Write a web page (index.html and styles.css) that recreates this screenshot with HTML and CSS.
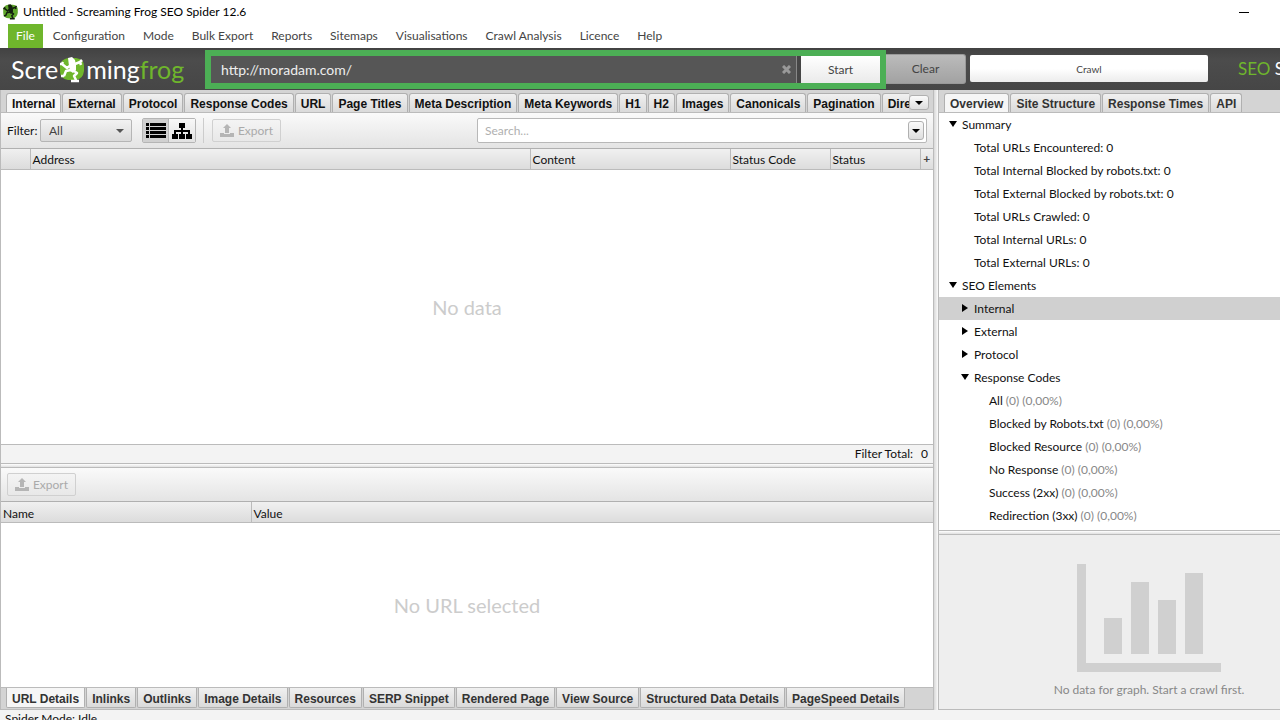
FILE: index.html
```
<!DOCTYPE html>
<html lang="en">
<head>
<meta charset="utf-8">
<title>Untitled - Screaming Frog SEO Spider 12.6</title>
<link rel="stylesheet" href="styles.css">
</head>
<body>
<svg class="defs" aria-hidden="true">
  <symbol id="frog" viewBox="0 0 28 28">
    <path class="frog-disc" d="M10 3H18Q26 4 26 11V16Q25 24 18 25H10Q2 24 2 16V11Q3 4 10 3Z"/>
    <path class="frog-body" d="M10 3L14 2 17 5 18 10 18 15 15 18 12 16 11 11Z"/>
    <path class="frog-limb" d="M13 10L9 13 4 9M4 9L2 9M4 9L5 7M17 9L22 7 23 10M22 7L24 5M13 15L8 16 6 21M6 21L3 21M16 16L19 18 16 21 18 25M13 26H21"/>
  </symbol>
  <symbol id="upload" viewBox="0 0 14 13">
    <path d="M7 0L11 4H9V9H5V4H3ZM0 9H4V10H10V9H14V13H0Z"/>
  </symbol>
</svg>
<div class="app">
  <header class="titlebar">
    <svg class="app-icon"><use href="#frog"/></svg>
    <span class="title">Untitled - Screaming Frog SEO Spider 12.6</span>
    <button class="minimise" aria-label="Minimise"><span></span></button>
  </header>
  <nav class="menu">
    <button class="menu-item active">File</button>
    <button class="menu-item">Configuration</button>
    <button class="menu-item">Mode</button>
    <button class="menu-item">Bulk Export</button>
    <button class="menu-item">Reports</button>
    <button class="menu-item">Sitemaps</button>
    <button class="menu-item">Visualisations</button>
    <button class="menu-item">Crawl Analysis</button>
    <button class="menu-item">Licence</button>
    <button class="menu-item">Help</button>
  </nav>
  <div class="banner">
    <div class="logo"><span>Scre</span><svg class="logo-frog"><use href="#frog"/></svg><span>ming</span><span class="green">frog</span></div>
    <form class="crawl-form">
      <div class="url-box">
        <input class="url-input" type="text" aria-label="URL to spider" value="http://moradam.com/">
        <button class="url-clear" type="button" aria-label="Clear URL"><svg viewBox="0 0 9 9"><path d="M1 1L8 8M8 1L1 8"/></svg></button>
      </div>
      <button class="start" type="button">Start</button>
    </form>
    <button class="clear">Clear</button>
    <div class="progress">Crawl</div>
    <div class="product"><span class="green">SEO</span> Spider</div>
  </div>
  <main class="workspace">
    <section class="left">
      <div class="tabs top-tabs">
        <div class="tab-strip">
          <button class="tab selected">Internal</button>
          <button class="tab">External</button>
          <button class="tab">Protocol</button>
          <button class="tab">Response Codes</button>
          <button class="tab">URL</button>
          <button class="tab">Page Titles</button>
          <button class="tab">Meta Description</button>
          <button class="tab">Meta Keywords</button>
          <button class="tab">H1</button>
          <button class="tab">H2</button>
          <button class="tab">Images</button>
          <button class="tab">Canonicals</button>
          <button class="tab">Pagination</button>
          <button class="tab">Directives</button>
        </div>
        <button class="drop" aria-label="More tabs"><span class="caret"></span></button>
      </div>
      <div class="toolbar">
        <label for="filter">Filter:</label>
        <div class="select-wrap">
          <select id="filter"><option>All</option></select>
          <span class="caret grey"></span>
        </div>
        <div class="views">
          <button class="view on" aria-label="List view"><svg width="20" height="16" viewBox="0 0 20 16"><path d="M0 0H3V3H0ZM4 0H20V3H4ZM0 4H3V7H0ZM4 4H20V7H4ZM0 8H3V11H0ZM4 8H20V11H4ZM0 12H3V15H0ZM4 12H20V15H4Z"/></svg></button>
          <button class="view" aria-label="Tree view"><svg width="20" height="16" viewBox="0 0 20 16"><path d="M7 0H13V5H11V7H18V11H20V16H14V11H16V9H11V11H13V16H7V11H9V9H4V11H6V16H0V11H2V7H9V5H7Z"/></svg></button>
        </div>
        <span class="rule"></span>
        <button class="export" disabled><svg width="14" height="13"><use href="#upload"/></svg>Export</button>
        <div class="search">
          <input type="text" placeholder="Search..." aria-label="Search">
          <button class="drop" aria-label="Search options"><span class="caret"></span></button>
        </div>
      </div>
      <div class="grid-pane">
        <table class="grid">
          <colgroup><col class="c-row"><col class="c-address"><col class="c-content"><col class="c-code"><col><col class="c-plus"></colgroup>
          <thead><tr><th></th><th>Address</th><th>Content</th><th>Status Code</th><th>Status</th><th class="plus">+</th></tr></thead>
        </table>
        <div class="empty">No data</div>
      </div>
      <div class="totals"><span>Filter Total:</span><span>0</span></div>
      <div class="split-h"></div>
      <div class="toolbar lower">
        <button class="export" disabled><svg width="14" height="13"><use href="#upload"/></svg>Export</button>
      </div>
      <div class="grid-pane details">
        <table class="grid">
          <colgroup><col class="c-name"><col></colgroup>
          <thead><tr><th>Name</th><th>Value</th></tr></thead>
        </table>
        <div class="empty">No URL selected</div>
      </div>
      <div class="tabs bottom-tabs">
        <button class="tab selected">URL Details</button>
        <button class="tab">Inlinks</button>
        <button class="tab">Outlinks</button>
        <button class="tab">Image Details</button>
        <button class="tab">Resources</button>
        <button class="tab">SERP Snippet</button>
        <button class="tab">Rendered Page</button>
        <button class="tab">View Source</button>
        <button class="tab">Structured Data Details</button>
        <button class="tab">PageSpeed Details</button>
      </div>
    </section>
    <div class="split-v"></div>
    <aside class="right">
      <div class="tabs side-tabs">
        <button class="tab selected">Overview</button>
        <button class="tab">Site Structure</button>
        <button class="tab">Response Times</button>
        <button class="tab">API</button>
      </div>
      <ul class="tree">
        <li class="l1"><span class="arrow down"></span>Summary</li>
        <li class="l2">Total URLs Encountered: 0</li>
        <li class="l2">Total Internal Blocked by robots.txt: 0</li>
        <li class="l2">Total External Blocked by robots.txt: 0</li>
        <li class="l2">Total URLs Crawled: 0</li>
        <li class="l2">Total Internal URLs: 0</li>
        <li class="l2">Total External URLs: 0</li>
        <li class="l1"><span class="arrow down"></span>SEO Elements</li>
        <li class="l2 current"><span class="arrow"></span>Internal</li>
        <li class="l2"><span class="arrow"></span>External</li>
        <li class="l2"><span class="arrow"></span>Protocol</li>
        <li class="l2"><span class="arrow down"></span>Response Codes</li>
        <li class="l3">All <span class="count">(0) (0,00%)</span></li>
        <li class="l3">Blocked by Robots.txt <span class="count">(0) (0,00%)</span></li>
        <li class="l3">Blocked Resource <span class="count">(0) (0,00%)</span></li>
        <li class="l3">No Response <span class="count">(0) (0,00%)</span></li>
        <li class="l3">Success (2xx) <span class="count">(0) (0,00%)</span></li>
        <li class="l3">Redirection (3xx) <span class="count">(0) (0,00%)</span></li>
      </ul>
      <div class="split-h"></div>
      <div class="graph">
        <svg width="144" height="108" viewBox="0 0 144 108"><path d="M0 0H9V99H144V108H0ZM27 54H45V90H27ZM54 18H72V90H54ZM81 36H99V90H81ZM108 9H126V90H108Z"/></svg>
        <p>No data for graph. Start a crawl first.</p>
      </div>
    </aside>
  </main>
  <footer class="status">Spider Mode: Idle</footer>
</div>
</body>
</html>
```

FILE: styles.css
```
* { box-sizing: border-box; }

body {
  margin: 0;
  background: #fff;
  color: #111;
  font: 12px/16px Lato, "Open Sans", sans-serif;
}

button, input, select { font: inherit; color: inherit; margin: 0; }
button { padding: 0; white-space: nowrap; }

.defs { position: absolute; width: 0; height: 0; }

.app {
  display: flex;
  flex-direction: column;
  height: 100vh;
  overflow: hidden;
}

.titlebar, .menu, .banner, .status { flex: none; }

.titlebar {
  display: flex;
  align-items: center;
  height: 24px;
  padding-left: 2px;
}
.app-icon { width: 17px; height: 17px; margin: 0 4px 2px 0; --disc: #5fa62b; --body: #14200f; }
.title { flex: 1; color: #000; }
.minimise {
  width: 46px;
  height: 24px;
  margin-right: 13px;
  border: 0;
  background: none;
}
.minimise span { display: block; width: 10px; height: 1px; margin: 0 auto; background: #000; }
.frog-disc { fill: var(--disc); }
.frog-body { fill: var(--body); }
.frog-limb { fill: none; stroke: var(--body); stroke-width: 2.5; stroke-linejoin: round; }

.menu { display: flex; height: 24px; padding-left: 8px; }
.menu-item {
  padding: 0 8px;
  margin-right: 2px;
  border: 0;
  background: none;
  color: #444;
}
.menu-item.active { background: #6fb62c; color: #fff; }

.banner {
  display: flex;
  height: 42px;
  background: linear-gradient(#424242, #4c4c4c 30%, #464646);
}
.logo {
  flex: none;
  display: flex;
  align-items: center;
  width: 205px;
  padding-left: 11px;
  color: #fff;
  font-size: 25px;
  line-height: 40px;
}
.logo-frog { width: 28px; height: 28px; --disc: #6fb62c; --body: #fff; }
.green { color: #6fb62c; }

.crawl-form {
  flex: 1;
  display: flex;
  gap: 4px;
  margin-top: 2px;
  height: 39px;
  border: 6px solid #4caf55;
  background: #464646;
}
.url-box {
  flex: 1;
  display: flex;
  align-items: center;
  border-right: 1px solid #888;
  background: #565656;
}
.url-input {
  flex: 1;
  min-width: 0;
  height: 27px;
  padding: 0 10px;
  border: 0;
  outline: 0;
  background: none;
  color: #eee;
  font-size: 14px;
}
.url-clear { width: 9px; height: 9px; margin-right: 5px; border: 0; background: none; }
.url-clear svg { display: block; width: 9px; height: 9px; stroke: #999; stroke-width: 3; }
.start {
  width: 79px;
  border: 0;
  background: linear-gradient(#fff, #eaeaea);
  color: #444;
}
.clear {
  width: 80px;
  margin: 6px 0;
  border: 1px solid #999;
  border-left: 0;
  border-radius: 0 3px 3px 0;
  background: linear-gradient(#bbb, #a2a2a2);
  color: #444;
}
.progress {
  width: 238px;
  height: 27px;
  margin: 7px 0 0 4px;
  border-radius: 2px;
  background: linear-gradient(#fff, #fff 50%, #ececec);
  color: #444;
  font-size: 10px;
  line-height: 28px;
  text-align: center;
}
.product {
  width: 72px;
  padding-left: 30px;
  overflow: hidden;
  color: #fff;
  font-size: 17px;
  line-height: 42px;
  white-space: nowrap;
}

.workspace {
  flex: 1;
  min-height: 0;
  display: grid;
  grid-template-columns: minmax(0, 1fr) 5px 341px;
}
.left, .right { display: flex; flex-direction: column; min-width: 0; min-height: 0; }
.left { border: solid #bbb; border-width: 0 1px; }
.left > *, .right > * { flex: none; }

.tabs { display: flex; background: #d4d4d4; }
.tab-strip { flex: 1; display: flex; overflow: hidden; min-width: 0; height: 23px; padding-top: 3px; }
.tab {
  flex: none;
  height: 19px;
  margin-right: 1px;
  padding: 2px 5px 0;
  border: 1px solid #b0b0b0;
  border-bottom: 0;
  border-radius: 3px 3px 0 0;
  background: linear-gradient(#f0f0f0, #dadada);
  color: #111;
  font: bold 12px/16px "Liberation Sans", Arial, sans-serif;
}
.tab.selected { background: #f6f6f6; }
.top-tabs { padding-left: 5px; border-bottom: 1px solid #bbb; height: 23px; }
.top-tabs .drop { margin: 5px 4px 0 0; }
.drop {
  display: grid;
  place-items: center;
  flex: none;
  width: 20px;
  height: 15px;
  border: 1px solid #b0b0b0;
  border-radius: 3px;
  background: linear-gradient(#fafafa, #dedede);
}
.caret {
  border: 4px solid transparent;
  border-top-color: #000;
  border-bottom-width: 0;
}
.caret.grey { border-top-color: #555; }
.side-tabs { height: 23px; padding: 3px 0 0 5px; border-bottom: 1px solid #bbb; }
.side-tabs .tab, .bottom-tabs .tab { color: #333; }
.bottom-tabs { height: 23px; padding-left: 5px; border: solid #bbb; border-width: 1px 0; }
.bottom-tabs .tab { height: 20px; border-width: 0 1px 1px; border-style: solid; border-color: #b0b0b0; border-radius: 0 0 2px 2px; }

.toolbar {
  display: flex;
  align-items: center;
  height: 36px;
  padding: 0 6px;
  border-bottom: 1px solid #b0b0b0;
  background: linear-gradient(#fafafa, #e4e4e4);
}
.toolbar label { width: 33px; white-space: nowrap; }
.select-wrap { position: relative; }
.select-wrap select {
  display: block;
  appearance: none;
  width: 92px;
  height: 23px;
  padding: 0 8px;
  border: 1px solid #b5b5b5;
  border-radius: 2px;
  background: linear-gradient(#f2f2f2, #dadada);
  color: #444;
}
.select-wrap .caret { position: absolute; right: 8px; top: 10px; }
.views {
  display: flex;
  height: 25px;
  margin-left: 10px;
  border: 1px solid #b5b5b5;
  border-radius: 2px;
}
.view {
  display: grid;
  place-items: center;
  width: 26px;
  border: 0;
  background: linear-gradient(#f8f8f8, #e2e2e2);
}
.view.on { border-right: 1px solid #b5b5b5; background: #d0d0d0; }
.rule { width: 1px; height: 25px; margin: 0 8px 0 7px; background: #ccc; }
.export {
  display: flex;
  align-items: center;
  justify-content: center;
  gap: 4px;
  width: 69px;
  height: 23px;
  border: 1px solid #d0d0d0;
  border-radius: 2px;
  background: linear-gradient(#f4f4f4, #e8e8e8);
  color: #aaa;
  fill: #b5b5b5;
}
.search {
  display: flex;
  align-items: center;
  width: 450px;
  height: 25px;
  margin-left: auto;
  padding-right: 2px;
  border: 1px solid #b8b8b8;
  border-radius: 2px;
  background: #fff;
}
.search input {
  flex: 1;
  min-width: 0;
  padding: 0 7px;
  border: 0;
  outline: 0;
  background: none;
}
.search input::placeholder { color: #b0b0b0; }
.search .drop { width: 16px; height: 19px; }

.left > .grid-pane { flex: 296 1 0; display: flex; flex-direction: column; min-height: 0; background: #fff; }
.left > .details { flex-grow: 185; }
.grid { width: 100%; border-collapse: collapse; table-layout: fixed; }
.grid th {
  height: 20px;
  padding: 2px 2px 0;
  border-right: 1px solid #bbb;
  border-bottom: 1px solid #bbb;
  background: linear-gradient(#f0f0f0, #dcdcdc);
  font-weight: normal;
  line-height: 17px;
  text-align: left;
  white-space: nowrap;
}
.grid th:last-child { border-right: 0; }
.grid .plus { padding: 0; font-weight: bold; text-align: center; color: #444; }
.c-row { width: 29px; }
.c-address { width: 500px; }
.c-content { width: 200px; }
.c-code { width: 100px; }
.c-plus { width: 13px; }
.c-name { width: 250px; }
.empty {
  flex: 1;
  display: grid;
  place-items: center;
  color: #ccc;
  font-size: 20px;
}
.totals {
  display: flex;
  justify-content: flex-end;
  gap: 8px;
  height: 19px;
  padding: 1px 5px 0 0;
  border-top: 1px solid #bbb;
  background: #f3f3f3;
}
.split-h {
  height: 5px;
  border: solid #bbb;
  border-width: 1px 0;
  background: linear-gradient(#fff, #e0e0e0);
}
.lower { height: 34px; }
.split-v { background: linear-gradient(90deg, #d8d8d8, #fafafa); border-right: 1px solid #bbb; }

.right > .tree {
  flex: 1;
  min-height: 0;
  margin: 0;
  padding: 0;
  overflow: hidden;
  background: #fff;
  list-style: none;
}
.tree li { position: relative; height: 23px; line-height: 23px; white-space: nowrap; }
.l1 { padding-left: 23px; }
.l2 { padding-left: 35px; }
.l3 { padding-left: 50px; }
.current { background: #d0d0d0; }
.count { color: #888; }
.arrow {
  position: absolute;
  left: 23px;
  top: 7px;
  border: 4px solid transparent;
  border-left: 6px solid #000;
  border-right-width: 0;
}
.arrow.down {
  left: 22px;
  top: 8px;
  border: 4px solid transparent;
  border-top: 6px solid #000;
  border-bottom-width: 0;
}
.l1 .arrow.down { left: 10px; }
.graph {
  display: flex;
  flex-direction: column;
  align-items: center;
  height: 175px;
  padding: 29px 0 0 79px;
  border-bottom: 1px solid #bbb;
  background: #eee;
  color: #888;
  fill: #d0d0d0;
}
.graph p { margin: 10px 0 0; white-space: nowrap; }
.status { height: 10px; padding: 1px 5px 0; overflow: hidden; background: #f3f3f3; }
```
